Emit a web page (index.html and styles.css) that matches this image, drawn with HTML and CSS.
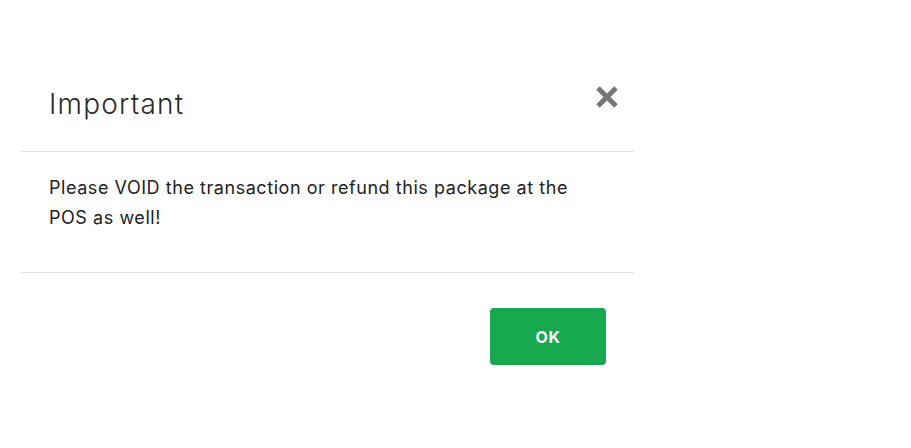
FILE: index.html
```html
<!DOCTYPE html>
<html lang="en">
<head>
    <meta charset="UTF-8">
    <title>Important</title>
    <link rel="stylesheet" href="styles.css">
</head>
<body>
    <div class="modal">
        <div class="modal-header">
            <h3 class="modal-title">Important</h3>
            <button type="button" class="close" aria-label="Close">
                <svg width="24" height="24" viewBox="0 0 24 24">
                    <path d="M3 3 L21 21 M21 3 L3 21" stroke="#787878" stroke-width="5" stroke-linecap="butt"/>
                </svg>
            </button>
        </div>
        <div class="modal-body">
            <p>Please VOID the transaction or refund this package at the<br>POS as well!</p>
        </div>
        <div class="modal-footer">
            <button type="button" class="btn-ok">OK</button>
        </div>
    </div>
</body>
</html>
```

FILE: styles.css
```css
body {
    margin: 0;
    background-color: #fff;
    font-family: Inter, "Noto Sans", sans-serif;
    color: #222;
}

.modal {
    width: 613px;
    margin: 56px 0 0 21px;
}

.modal-header {
    display: flex;
    justify-content: space-between;
    align-items: flex-start;
    padding: 32px 15px 31px 28px;
    border-bottom: 1px solid #e2e2e2;
}

.modal-title {
    margin: 0;
    font-size: 28px;
    font-weight: 300;
    letter-spacing: 1.2px;
    line-height: 32px;
    color: #2b2b2b;
}

.close {
    background: none;
    border: none;
    padding: 0;
    margin-top: -3px;
    cursor: pointer;
}

.close svg {
    display: block;
}

.modal-body {
    padding: 21px 28px 39px;
    border-bottom: 1px solid #e2e2e2;
}

.modal-body p {
    margin: 0;
    font-size: 18px;
    letter-spacing: 0.55px;
    line-height: 30px;
}

.modal-footer {
    display: flex;
    justify-content: flex-end;
    padding: 35px 28px;
}

.btn-ok {
    width: 116px;
    height: 57px;
    border: none;
    border-radius: 4px;
    background-color: #17a84f;
    color: #fff;
    font-family: Inter, "Noto Sans", sans-serif;
    font-size: 16px;
    font-weight: 700;
    letter-spacing: 0.5px;
    cursor: pointer;
}
```
